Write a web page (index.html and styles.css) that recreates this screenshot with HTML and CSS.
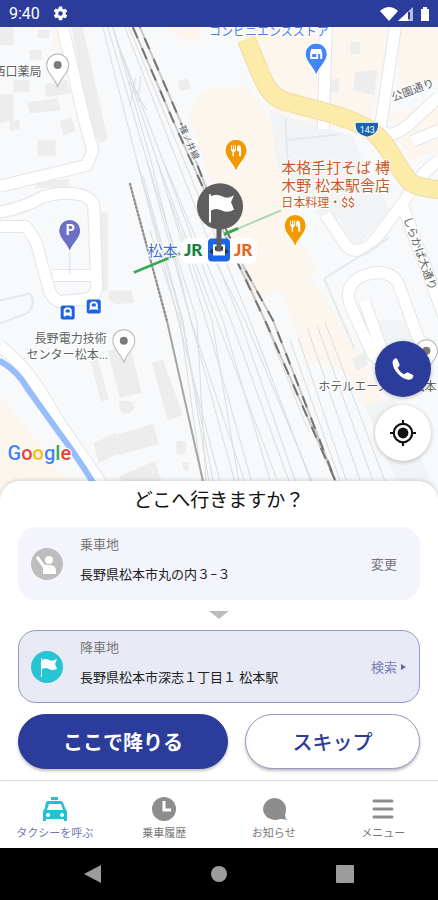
FILE: index.html
```
<!DOCTYPE html>
<html lang="ja">
<head>
    <meta charset="UTF-8">
    <meta name="viewport" content="width=device-width, initial-scale=1.0">
    <title>タクシーを呼ぶ</title>
    <link rel="stylesheet" href="styles.css">
</head>
<body>
    <header class="status-bar">
        <span class="clock">9:40</span>
        <svg class="gear" viewBox="0 0 24 24" width="17" height="17" fill="#fff"><path d="M19.14 12.94a7 7 0 0 0 0-1.88l2.03-1.58a.5.5 0 0 0 .12-.61l-1.92-3.32a.5.5 0 0 0-.59-.22l-2.39.96a7 7 0 0 0-1.62-.94l-.36-2.54A.5.5 0 0 0 13.92 2h-3.84a.5.5 0 0 0-.47.41l-.36 2.54a7 7 0 0 0-1.62.94l-2.39-.96a.5.5 0 0 0-.59.22L2.74 8.470a.5.5 0 0 0 .12.61l2.030 1.580a7 7 0 0 0 0 1.880l-2.030 1.980a.5.5 0 0 0-.12.61l1.920 3.320c.12.22.37.29.59.22l2.390-.96c.5.38 1.030.7 1.620.94l.36 2.540c.05.24.24.41.48.41h3.840c.24 0 .44-.17.47-.41l.36-2.540a7 7 0 0 0 1.620-.94l2.390.96c.22.08.47 0 .59-.22l1.920-3.320a.5.5 0 0 0-.12-.61zM12 15.200a3.200 3.200 0 1 1 0-6.400 3.200 3.200 0 0 1 0 6.400z"/></svg>
        <svg class="signals" viewBox="0 0 50 16" width="50" height="16">
            <path d="M0 5Q9-3 18 5L9 15z" fill="#fff"/>
            <path d="M18 15L33 1v14z" fill="#b9c0e6"/>
            <path d="M18 15L28 6v9z" fill="#fff"/>
            <path d="M29 6v7" stroke="#2b3c9b" stroke-width="2"/>
            <path d="M43 1h4v2h2v12h-8V3h2z" fill="#fff"/>
        </svg>
    </header>

    <main class="map">
        <svg class="map-canvas" viewBox="0 27 438 473" preserveAspectRatio="xMidYMid slice">
            <defs>
                <g id="fork" fill="#fff"><path d="M-5-5h1v4h1v-4h1v4h1v-4h1v5l-2 2v4h-1.500v-4l-1.500-2zM2-5q3 0 3 3v8H3V1H1v-3q0-2 1-3z"/></g>
                <path id="pin" d="M0 22C-2 13-11 9-11 0A11 11 0 0 1 11 0C11 9 2 13 0 22z"/>
                <path id="roads" d="M63 27l21 90 9 33-6 15L0 186M0 212q28-6 44-16 40-9 50 8l2 55 1 28q-2 12-15 12l-21 2q-9-2-12-14l-9-32q-2-15-14-29H0M53 275h40M326 27l-3 102M395 27l-15 100q5 15 28-2l30-28M412 141l26-11M438 160q-20 15-35 42l-32 42q-17 12-26 0l-20-30M402 205l45 120M350 305q-8-25 20-32 20-4 28 10l18 50q8 18 22 12M350 305l23 50q15 12 5-15l-14-40M0 345q30 22 55 70l55 80"/>
            </defs>
            <rect y="27" width="438" height="473" fill="#f7f9fa"/>

            <!-- 商業エリア -->
            <g fill="#fdf6ef">
                <path d="M52 27h8v24l-7-6zM165 27h40l-10 17-22-10zM190 120q0-20 18-32l40 0 50 65-10 60 30 60-58 24-8 2-25-70z"/>
                <path d="M244 27h78v102l-42-12q-18-4-26-50zM328 27h62l-22 106-40-6zM395 27h43v52l-40 18zM390 115l48-15v50l-30 10zM280 288l30-12 37 55 80 149h-22l-60-110-40-12zM0 395l30 35 53 70H0z"/>
            </g>
            <g fill="#f1f3f4">
                <path d="M270 110q40 15 82 25l25 65-50 25-50-60zM328 197l50-12 12 25-35 38-22-40z"/>
                <path d="M350 320h60l15 60-30-15zM365 405l28-8 45 100h-35z"/>
            </g>

            <!-- 建物 -->
            <g fill="#ededed">
                <path d="M0 27h14v18H0zM38 30h12v8H38zM14 80h16v12H14zM30 50h12v10H30zM0 94h14v26l-14 3zM45 84l22-4 4 13-24 4zM28 102l30-4 3 12-31 3zM60 121l12-4 4 14-12 4zM38 140h18v16H38zM10 120h10v10H10zM72 27h11l25 112-8 4-11-18zM178 81l10-3 3 10-11 3z"/>
                <path d="M36 181l33-2v7l-33 2zM101 212h7v78h-7zM110 290h22l2 12-18 2-8-6z"/>
                <path d="M91 360l7-2 11 41-8 2zM108 350l22-5 12 47-22 5zM152 362l11-3 20 55-15 6zM94 442l22-10 3 20-20 10zM117 434l36-11 6 20-40 11zM120 475l35-15 10 30h-40zM119 403q1-4 8-3l7 2q1 10-7 11-8-1-8-10zM176 444q0-5 5-4 5 0 6 5 0 9-6 9-5 0-5-10zM182 461h7l-1 10-5-4z"/>
                <path d="M355 72l22-2-3 25-21-5zM350 42h10v12h-10zM331 80l8-2v14h-8zM352 358l12-6 4 12-12 6z"/>
            </g>

            <!-- 細い道 -->
            <use href="#roads" class="road-edge"/>
            <use href="#roads" class="road"/>
            <path d="M285 118l3 50M285 140l55-6M324 278l64-40M324 278l30 70M70 250v23M0 300l30-7q8 10-3 20L0 323" fill="none" stroke="#e6e9eb" stroke-width="2"/>

            <!-- 国道143号 -->
            <path d="M246 39c17 38 18 54 38 62 32 9 65 15 88 30 18 14 25 38 38 51q9 6 35 8" fill="none" stroke="#efdda6" stroke-width="19"/>
            <path d="M246 39c17 38 18 54 38 62 32 9 65 15 88 30 18 14 25 38 38 51q9 6 35 8" fill="none" stroke="#fdebaa" stroke-width="17"/>
            <path d="M355 122h23q2 12-11 15-14-3-12-15z" fill="#1a63ad" stroke="#fff"/>
            <text x="367" y="133" class="shield">143</text>

            <!-- 川 -->
            <path d="M0 360q18 10 28 28l44 61q14 20 26 40" fill="none" stroke="#98bdfb" stroke-width="6"/>

            <!-- 線路 -->
            <g class="tracks">
                <path d="M103 27l34 133 88 340M108 27l39 133 93 340M113 27l44 133 55 180 45 160M115 35l48 125 60 160 53 180M125 27l52 133 63 160 62 180M129 27l55 133 66 160 68 180"/>
                <path d="M137 160l45 160 35 180M147 160l50 160 10 180M157 160l60 160 68 180M163 160l68 160 65 180M113 27l38 133 40 160 60 180M130 82l17 28M136 78l-6 28M141 76l-3 26"/>
                <path d="M143 175l40 145 29 180M170 200l42 120 30 180M150 230l30 90 25 180M205 240l40 80 75 180"/>
                <path d="M298 337l55 163M307 327l60 173M317 325l63 175M325 322l67 178M290 340l57 160M241 262l68 170"/>
            </g>
            <path d="M130 183l37 137 36 160" fill="none" stroke="#a5a5a5" stroke-width="2"/>
            <path d="M130 183l37 137" fill="none" stroke="#888" stroke-width="2" stroke-dasharray="2 2"/>
            <g fill="none" stroke="#c8c8c8" stroke-width="2">
                <path d="M133 27l40 93 30 67 35 76 27 57 71 162"/>
                <path d="M140 27l40 93 26 67 38 80 29 53 63 162"/>
            </g>
            <g fill="none" stroke="#747474" stroke-width="2" stroke-dasharray="12 11">
                <path d="M133 27l40 93 30 67 35 76 27 57 71 162"/>
                <path stroke-dashoffset="11" d="M140 27l40 93 26 67 38 80 29 53 63 162"/>
            </g>
            <text class="label small" transform="translate(179 127) rotate(66)">篠ノ井線</text>
            <path d="M134 272l46-19" stroke="#35a853" stroke-width="2.500"/>
            <path d="M224 234l57-24" stroke="#a9d8b4" stroke-width="2"/>
            <path d="M224 234l14-6" stroke="#35a853" stroke-width="3"/>

            <!-- 駅 -->
            <rect x="181" y="238" width="76" height="25" rx="8" fill="#fff"/>
            <text x="148" y="256" class="label station">松本</text>
            <text x="184" y="256" class="jr" fill="#118039">JR</text>
            <text x="234" y="256" class="jr" fill="#e8641b">JR</text>
            <rect x="208" y="238" width="22" height="23" rx="4" fill="#1967e8"/>
            <path d="M213 244h12v11h-12z" fill="#fff"/><path d="M215 246h8v4h-8zM209 251l4-3v6zM229 251l-4-3v6z" fill="#333"/>
            <g fill="#1d62e0"><rect x="61" y="305" width="14" height="14" rx="2"/><rect x="87" y="299" width="14" height="14" rx="2"/></g>
            <g fill="#fff"><path d="M64 309l2-2h4l2 2v7h-2v-1h-4v1h-2zM90 303l2-2h4l2 2v5l1 2-2-1h-6l-2 1 1-2z"/></g>
            <path d="M66 309h4v3h-4zM92 303h4v3h-4z" fill="#1d62e0"/>

            <!-- スポット -->
            <g stroke="#fff">
                <use href="#pin" x="316" y="54" fill="#4285f4"/>
                <use href="#pin" x="236" y="150" fill="#f29900"/>
                <use href="#pin" x="295" y="225" fill="#f29900"/>
                <use href="#pin" x="70" y="230" fill="#6b6fc5"/>
            </g>
            <use href="#fork" x="236" y="150"/><use href="#fork" x="295" y="225"/>
            <path d="M311 49h10l1 4v6h-12v-6z" fill="#fff"/><path d="M312 54h4v3h-4zM318 54h2v5h-2z" fill="#4285f4"/>
            <text x="66" y="235" class="parking">P</text>
            <g fill="#fff" stroke="#b5b5b5"><use href="#pin" x="58" y="65"/><use href="#pin" x="124" y="340"/><use href="#pin" x="426" y="350"/></g>
            <g fill="#7b7b7b"><circle cx="58" cy="65" r="4"/><circle cx="124" cy="340" r="4"/><circle cx="426" cy="350" r="4"/></g>

            <text x="209" y="36" class="label store">コンビニエンスストア</text>
            <text x="-6" y="76" class="label">西口薬局</text>
            <text x="281" y="173" class="label food">本格手打そば 榑</text>
            <text x="281" y="191" class="label food">木野 松本駅舎店</text>
            <text x="281" y="207" class="label food-sub">日本料理・$$</text>
            <text x="35" y="342" class="label">長野電力技術</text>
            <text x="27" y="358" class="label">センター松本...</text>
            <text x="318" y="390" class="label">ホテルエース</text>
            <text x="412" y="390" class="label">松本</text>
            <text class="label street" transform="translate(393 101) rotate(-20)">公園通り</text>
            <text class="label street" transform="translate(403 218) rotate(70)">しらかば大通り</text>

            <!-- 降車ピン -->
            <path d="M219 222v29" stroke="#5e5e5e" stroke-width="5"/>
            <circle cx="220" cy="206" r="23" fill="#5e5e5e"/>
            <path d="M209 194h2v2q5-3 11 0t12-1l-3 7 3 7q-6 4-12 1t-11 0v12h-2z" fill="#fff"/>

            <text x="8" y="459" class="google"><tspan fill="#4285f4">G</tspan><tspan fill="#ea4335">o</tspan><tspan fill="#fbbc05">o</tspan><tspan fill="#4285f4">g</tspan><tspan fill="#34a853">l</tspan><tspan fill="#ea4335">e</tspan></text>
        </svg>

        <div class="map-actions">
            <button class="round call" aria-label="電話">
                <svg viewBox="0 0 24 24" width="28" height="28" fill="#fff"><path d="M7 3.500L9 8q.4 1-.5 1.800L7.300 11q2 4 5.700 5.700l1.400-1.300q.8-.7 1.800-.3l4 1.900q1 .6.600 1.700-.9 2.500-3.800 2.500Q12.500 21 8 16.500T3 6.500Q3 3.800 5.200 3 6.500 2.600 7 3.500z"/></svg>
            </button>
            <button class="round locate" aria-label="現在地">
                <svg viewBox="0 0 24 24" width="26" height="26" fill="none" stroke="#111" stroke-width="2"><circle cx="12" cy="12" r="8.500"/><circle cx="12" cy="12" r="5" fill="#111" stroke="none"/><path d="M12 0v4M12 20v4M0 12h4M20 12h4"/></svg>
            </button>
        </div>
    </main>

    <section class="sheet">
        <h1>どこへ行きますか？</h1>
        <button class="place">
            <svg class="place-icon" viewBox="0 0 32 32" width="32" height="32"><circle cx="16" cy="16" r="16" fill="#bdbdbd"/><circle cx="18" cy="12" r="4" fill="#fff"/><path d="M8 9l5 7q1 1 3 1h3q6 0 6 6v3H12v-5q0-2-2-4L5 10q1-3 3-1z" fill="#fff"/></svg>
            <span class="place-text">
                <span class="place-kind">乗車地</span>
                <span class="place-name">長野県松本市丸の内３−３</span>
            </span>
            <span class="place-action">変更</span>
        </button>
        <svg class="arrow" viewBox="0 0 20 8" width="20" height="8"><path d="M0 0h20L10 8z" fill="#bdbdbd"/></svg>
        <button class="place selected">
            <svg class="place-icon" viewBox="0 0 32 32" width="32" height="32"><circle cx="16" cy="16" r="16" fill="#27c4d4"/><path d="M10 7h1v2q4-2 7 0t8-1l-2 5 2 5q-5 2-8 0t-7 0v8h-1z" fill="#fff"/></svg>
            <span class="place-text">
                <span class="place-kind">降車地</span>
                <span class="place-name">長野県松本市深志１丁目１ 松本駅</span>
            </span>
            <span class="place-action">検索<svg viewBox="0 0 5 6" width="5" height="6"><path d="M0 0l5 3-5 3z" fill="#6567a8"/></svg></span>
        </button>
        <div class="buttons">
            <button class="pill primary">ここで降りる</button>
            <button class="pill">スキップ</button>
        </div>
    </section>

    <nav class="tabs">
        <a href="#" class="tab active">
            <svg viewBox="0 0 26 26" width="26" height="26" fill="#27c0d3"><path fill-rule="evenodd" d="M9 1h7v3H9zM6 5h13q1.500 0 2 1.500L23.500 13q1.500 1 1.500 3v9h-3v-2H4v2H1v-9q0-2 1.500-3L4 6.500Q4.500 5 6 5zM7 8l-2 6h16l-2-6zM6 17a2 2 0 1 0 .1 0zM20 17a2 2 0 1 0 .1 0z"/></svg>
            タクシーを呼ぶ
        </a>
        <a href="#" class="tab">
            <svg viewBox="0 0 26 26" width="26" height="26"><circle cx="13" cy="13" r="12" fill="#8d8d8d"/><path d="M13 5v9h7" fill="none" stroke="#fff" stroke-width="3"/></svg>
            乗車履歴
        </a>
        <a href="#" class="tab">
            <svg viewBox="0 0 26 26" width="26" height="26" fill="#8d8d8d"><path d="M13 2a12 11 0 1 0 6 21q4 0 7 1-2-2-2-5 1-2 1-6A12 11 0 0 0 13 2z"/></svg>
            お知らせ
        </a>
        <a href="#" class="tab">
            <svg viewBox="0 0 26 26" width="26" height="26" stroke="#8d8d8d" stroke-width="3" stroke-linecap="round"><path d="M4 5h18M4 13h18M4 21h18"/></svg>
            メニュー
        </a>
    </nav>

    <footer class="system-bar">
        <button aria-label="戻る"><svg viewBox="0 0 18 18" width="18" height="18" fill="#9c9c9c"><path d="M17 0v18L0 9z"/></svg></button>
        <button aria-label="ホーム"><svg viewBox="0 0 18 18" width="18" height="18" fill="#9c9c9c"><circle cx="9" cy="9" r="8"/></svg></button>
        <button aria-label="アプリ履歴"><svg viewBox="0 0 18 18" width="18" height="18" fill="#9c9c9c"><rect width="18" height="18" rx="1"/></svg></button>
    </footer>
</body>
</html>
```
FILE: styles.css
```
* {
    box-sizing: border-box;
}
body {
    display: flex;
    flex-direction: column;
    min-height: 100vh;
    margin: 0;
    background: #fff;
    color: #222;
    font-family: Roboto, "Noto Sans CJK JP", sans-serif;
}
button {
    font-family: inherit;
    padding: 0;
    border: none;
    cursor: pointer;
}
svg {
    display: block;
}
.status-bar {
    display: flex;
    align-items: center;
    gap: 12px;
    padding: 0 8px 0 9px;
    height: 27px;
    background: #2b3c9b;
    color: #fff;
}
.clock {
    font-size: 16px;
}
.signals {
    margin-left: auto;
}

/* 地図 */
.map {
    position: relative;
    flex: 1;
    display: flex;
    min-height: 240px;
    overflow: hidden;
}
.map-canvas {
    flex: 1;
    width: 100%;
}
.road-edge, .road, .tracks {
    fill: none;
    stroke-linejoin: round;
}
.road-edge {
    stroke: #e3e5e8;
    stroke-width: 13px;
}
.road {
    stroke: #fff;
    stroke-width: 11px;
}
.tracks {
    stroke: #dcdddf;
    stroke-width: 1px;
}
.label {
    font-size: 12px;
    fill: #5c5f63;
    stroke: #fff;
    stroke-width: 2px;
    paint-order: stroke;
}
.small {
    font-size: 9px;
}
.street {
    font-size: 11px;
}
.station {
    font-size: 15px;
    fill: #3e6fd0;
}
.store {
    fill: #4a80e8;
}
.food {
    font-size: 15px;
    fill: #c95a26;
}
.food-sub {
    fill: #c95a26;
}
.shield {
    font-size: 9px;
    fill: #fff;
    text-anchor: middle;
}
.jr {
    font-family: Lato, sans-serif;
    font-size: 17px;
    font-weight: 900;
}
.parking {
    font-size: 14px;
    font-weight: 700;
    fill: #fff;
}
.google {
    font-size: 20px;
    font-weight: 500;
    stroke: #fff;
    stroke-width: 2px;
    paint-order: stroke;
}
.map-actions {
    position: absolute;
    right: 7px;
    bottom: 40px;
    display: flex;
    flex-direction: column;
    gap: 8px;
}
.round {
    display: flex;
    align-items: center;
    justify-content: center;
    width: 56px;
    height: 56px;
    border-radius: 50%;
    background: #fff;
    box-shadow: 0 1px 4px rgba(0, 0, 0, 0.25);
}
.call {
    background: #2b3c9b;
}

/* 下のパネル */
.sheet {
    position: relative;
    display: flex;
    flex-direction: column;
    margin-top: -20px;
    padding: 6px 18px 11px;
    border-radius: 20px 20px 0 0;
    background: #fff;
    box-shadow: 0 -1px 4px rgba(0, 0, 0, 0.15);
}
h1 {
    margin: 0 0 12px;
    font-size: 19px;
    line-height: 28px;
    font-weight: 400;
    text-align: center;
    color: #111;
}
.place {
    display: flex;
    align-items: center;
    gap: 17px;
    height: 73px;
    padding: 0 12px;
    border: 1px solid #f3f4fc;
    border-radius: 18px;
    background: #f3f4fc;
    text-align: left;
}
.selected {
    border-color: #9498c4;
    background: #e8eaf5;
}
.place-text {
    display: flex;
    flex: 1;
    flex-direction: column;
    gap: 10px;
    padding-bottom: 8px;
    font-size: 13px;
    line-height: 20px;
}
.place-kind {
    color: #777;
}
.place-name {
    color: #222;
}
.place-action {
    display: flex;
    align-items: center;
    gap: 4px;
    padding-right: 10px;
    font-size: 13px;
    color: #777;
}
.selected .place-action {
    padding-right: 1px;
    color: #7b7db3;
}
.arrow {
    align-self: center;
    margin: 11px 0;
}
.buttons {
    display: flex;
    gap: 17px;
    margin-top: 11px;
}
.pill {
    flex: 5;
    height: 55px;
    border: 1px solid #9498c4;
    border-radius: 28px;
    background: #fff;
    color: #2b3c9b;
    font-size: 20px;
    font-weight: 500;
    box-shadow: 0 2px 3px rgba(0, 0, 0, 0.25);
}
.primary {
    flex: 6;
    border-color: #2b3c9b;
    background: #2b3c9b;
    color: #fff;
    font-weight: 700;
}

.tabs {
    display: grid;
    grid-template-columns: repeat(4, 1fr);
    padding: 15px 0 6px;
    border-top: 1px solid #e2e2e2;
    background: #fff;
}
.tab {
    display: flex;
    flex-direction: column;
    align-items: center;
    gap: 4px;
    font-size: 11px;
    line-height: 16px;
    color: #777;
    text-decoration: none;
}
.active {
    color: #7476b8;
}
.system-bar {
    display: flex;
    justify-content: space-between;
    align-items: center;
    height: 52px;
    padding: 0 84px;
    background: #000;
}
.system-bar button {
    background: none;
}
```
